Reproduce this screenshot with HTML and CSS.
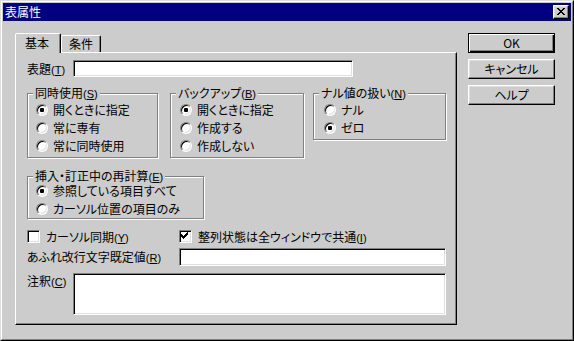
FILE: index.html
```html
<!DOCTYPE html>
<html lang="ja">
<head>
<meta charset="utf-8">
<title>表属性</title>
<link rel="stylesheet" href="styles.css">
</head>
<body>
<div class="window">
  <div class="frame">
    <div class="titlebar">
      <span class="title">表属性</span>
      <span class="close">
        <svg width="8" height="7" viewBox="0 0 8 7" shape-rendering="crispEdges"><path d="M0 0h2v1h-2zM6 0h2v1h-2zM1 1h2v1h-2zM5 1h2v1h-2zM2 2h4v1h-4zM3 3h2v1h-2zM2 4h4v1h-4zM1 5h2v1h-2zM5 5h2v1h-2zM0 6h2v1h-2zM6 6h2v1h-2z" fill="#000"/></svg>
      </span>
    </div>
    <div class="body">
      <div class="main">
        <div class="tabs">
          <div class="tab tab-active">基本</div>
          <div class="tab tab-plain">条件</div>
        </div>
        <div class="panel">
          <div class="row row-title">
            <span class="label label-short">表題<span class="mn">(<u>T</u>)</span></span>
            <span class="field field-title"></span>
          </div>
          <div class="groups">
            <div class="group g-share">
              <span class="legend">同時使用<span class="mn">(<u>S</u>)</span></span>
              <div class="opt"><span class="radio on"></span><span>開くときに指定</span></div>
              <div class="opt"><span class="radio"></span><span>常に専有</span></div>
              <div class="opt"><span class="radio"></span><span>常に同時使用</span></div>
            </div>
            <div class="group g-backup">
              <span class="legend">バックアップ<span class="mn">(<u>B</u>)</span></span>
              <div class="opt"><span class="radio on"></span><span>開くときに指定</span></div>
              <div class="opt"><span class="radio"></span><span>作成する</span></div>
              <div class="opt"><span class="radio"></span><span>作成しない</span></div>
            </div>
            <div class="group g-null">
              <span class="legend">ナル値の扱い<span class="mn">(<u>N</u>)</span></span>
              <div class="opt"><span class="radio"></span><span>ナル</span></div>
              <div class="opt"><span class="radio on"></span><span>ゼロ</span></div>
            </div>
          </div>
          <div class="group g-recalc">
            <span class="legend">挿入・訂正中の再計算<span class="mn">(<u>E</u>)</span></span>
            <div class="opt"><span class="radio on"></span><span>参照している項目すべて</span></div>
            <div class="opt"><span class="radio"></span><span>カーソル位置の項目のみ</span></div>
          </div>
          <div class="row row-checks">
            <div class="chk-item chk-first"><span class="check"></span><span>カーソル同期<span class="mn">(<u>Y</u>)</span></span></div>
            <div class="chk-item"><span class="check"><svg width="13" height="13" viewBox="0 0 13 13" shape-rendering="crispEdges"><path d="M8 2h1v1h-1zM7 3h2v1h-2zM2 4h1v1h-1zM6 4h3v1h-3zM2 5h2v1h-2zM5 5h3v1h-3zM2 6h5v1h-5zM3 7h3v1h-3zM4 8h1v1h-1z" fill="#000"/></svg></span><span>整列状態は全ウィンドウで共通<span class="mn">(<u>I</u>)</span></span></div>
          </div>
          <div class="row row-wrap">
            <span class="label label-long">あふれ改行文字既定値<span class="mn">(<u>R</u>)</span></span>
            <span class="field field-wrap"></span>
          </div>
          <div class="row row-note">
            <span class="label label-short label-top">注釈<span class="mn">(<u>C</u>)</span></span>
            <span class="field field-note"></span>
          </div>
        </div>
      </div>
      <div class="side">
        <div class="btn btn-default">OK</div>
        <div class="btn">キャンセル</div>
        <div class="btn">ヘルプ</div>
      </div>
    </div>
  </div>
</div>
</body>
</html>
```

FILE: styles.css
```css
* { box-sizing: border-box; }
html, body { margin: 0; padding: 0; }
body {
  width: 574px;
  height: 341px;
  overflow: hidden;
  background: #cccccc;
  font-family: "Noto Sans CJK JP", "Noto Sans", sans-serif;
  font-size: 12px;
  font-feature-settings: "palt";
  color: #000;
}
u { text-decoration: underline; text-underline-offset: 1px; }
.mn {
  font-family: "Liberation Sans", "DejaVu Sans", sans-serif;
  font-size: 11px;
  font-feature-settings: normal;
  line-height: 1;
}

.window {
  width: 574px;
  height: 341px;
  border: 1px solid;
  border-color: #dfdfdf #000 #000 #dfdfdf;
  background: #cccccc;
}
.frame {
  height: 100%;
  border: 1px solid;
  border-color: #fff #808080 #808080 #fff;
  padding: 1px;
  display: flex;
  flex-direction: column;
}
.titlebar {
  height: 18px;
  background: #000080;
  color: #fff;
  display: flex;
  align-items: center;
  justify-content: space-between;
  padding: 0 2px;
}
.title { line-height: 18px; }
.close {
  width: 16px;
  height: 14px;
  background: #cccccc;
  border: 1px solid;
  border-color: #fff #000 #000 #fff;
  box-shadow: inset -1px -1px #808080, inset 1px 1px #dfdfdf;
  display: flex;
  padding: 2px 0 0 3px;
}
.close svg { display: block; }

.body {
  display: flex;
  padding: 12px 0 0 12px;
}
.main { width: 442px; }

.tabs {
  display: flex;
  align-items: flex-end;
  height: 19px;
}
.tab {
  position: relative;
  background: #cccccc;
  border: 1px solid;
  border-bottom: none;
  border-color: #fff #000 transparent #fff;
  border-radius: 2px 2px 0 0;
  box-shadow: inset -1px 0 #808080;
  display: flex;
  align-items: center;
  justify-content: center;
  line-height: 14px;
}
.tab-active {
  width: 46px;
  height: 20px;
  margin-bottom: -1px;
  z-index: 1;
  padding: 0 2px 1px 0;
}
.tab-plain {
  width: 40px;
  height: 17px;
}

.panel {
  height: 273px;
  border: 1px solid;
  border-color: #fff #000 #000 #fff;
  box-shadow: inset -1px -1px #808080;
  padding: 0 10px 0 11px;
}

.row { display: flex; align-items: center; }
.label { white-space: nowrap; line-height: 14px; }
.label-short { width: 46px; flex: none; }
.label-long { width: 152px; flex: none; }
.label-top { align-self: flex-start; margin-top: 1px; }

.field {
  display: block;
  background: #fff;
  border: 1px solid;
  border-color: #808080 #fff #fff #808080;
  box-shadow: inset 1px 1px #000, inset -1px -1px #dfdfdf;
}
.row-title { margin-top: 7px; height: 17px; }
.field-title { width: 280px; height: 17px; }

.groups {
  display: flex;
  align-items: flex-start;
  margin-top: 16px;
}
.group {
  position: relative;
  border: 1px solid #808080;
  box-shadow: inset 1px 1px #fff, 1px 1px #fff;
  padding: 7px 0 2px 8px;
}
.legend {
  position: absolute;
  top: -7px;
  left: 5px;
  padding: 0 2px;
  background: #cccccc;
  line-height: 12px;
  white-space: nowrap;
}
.g-share { width: 131px; }
.g-backup { width: 134px; margin-left: 12px; padding-left: 9px; }
.g-null { width: 133px; margin-left: 9px; padding-left: 10px; }
.g-recalc { width: 177px; margin-top: 18px; padding-top: 5px; padding-bottom: 0; }

.opt {
  display: flex;
  align-items: center;
  gap: 5px;
  height: 18px;
  line-height: 14px;
  white-space: nowrap;
}
.radio {
  position: relative;
  flex: none;
  width: 12px;
  height: 12px;
  border-radius: 50%;
  background: #fff;
  border: 1px solid;
  border-color: #808080 #fff #fff #808080;
  box-shadow: inset 1px 1px #000, inset -1px -1px #dfdfdf;
}
.radio.on::after {
  content: "";
  position: absolute;
  left: 3px;
  top: 3px;
  width: 4px;
  height: 4px;
  border-radius: 1px;
  background: #000;
}

.row-checks { margin-top: 11px; height: 13px; }
.chk-item {
  display: flex;
  align-items: center;
  gap: 6px;
  white-space: nowrap;
  line-height: 13px;
}
.chk-first { width: 152px; flex: none; }
.check {
  flex: none;
  width: 13px;
  height: 13px;
  background: #fff;
  border: 1px solid;
  border-color: #808080 #fff #fff #808080;
  box-shadow: inset 1px 1px #000, inset -1px -1px #dfdfdf;
  position: relative;
}
.check svg { position: absolute; left: -1px; top: -1px; display: block; }

.row-wrap { margin-top: 5px; height: 18px; }
.field-wrap { flex: 1; height: 18px; }

.row-note { margin-top: 7px; align-items: flex-start; }
.field-note { flex: 1; height: 42px; }

.side {
  margin-left: 11px;
  display: flex;
  flex-direction: column;
  gap: 6px;
}
.btn {
  width: 87px;
  height: 20px;
  border: 1px solid;
  border-color: #fff #000 #000 #fff;
  box-shadow: inset -1px -1px #808080, inset 1px 1px #dfdfdf;
  display: flex;
  align-items: center;
  justify-content: center;
  line-height: 14px;
}
.btn-default {
  border-color: #000;
  box-shadow: inset 1px 1px #fff, inset -1px -1px #000, inset -2px -2px #808080;
}
```
